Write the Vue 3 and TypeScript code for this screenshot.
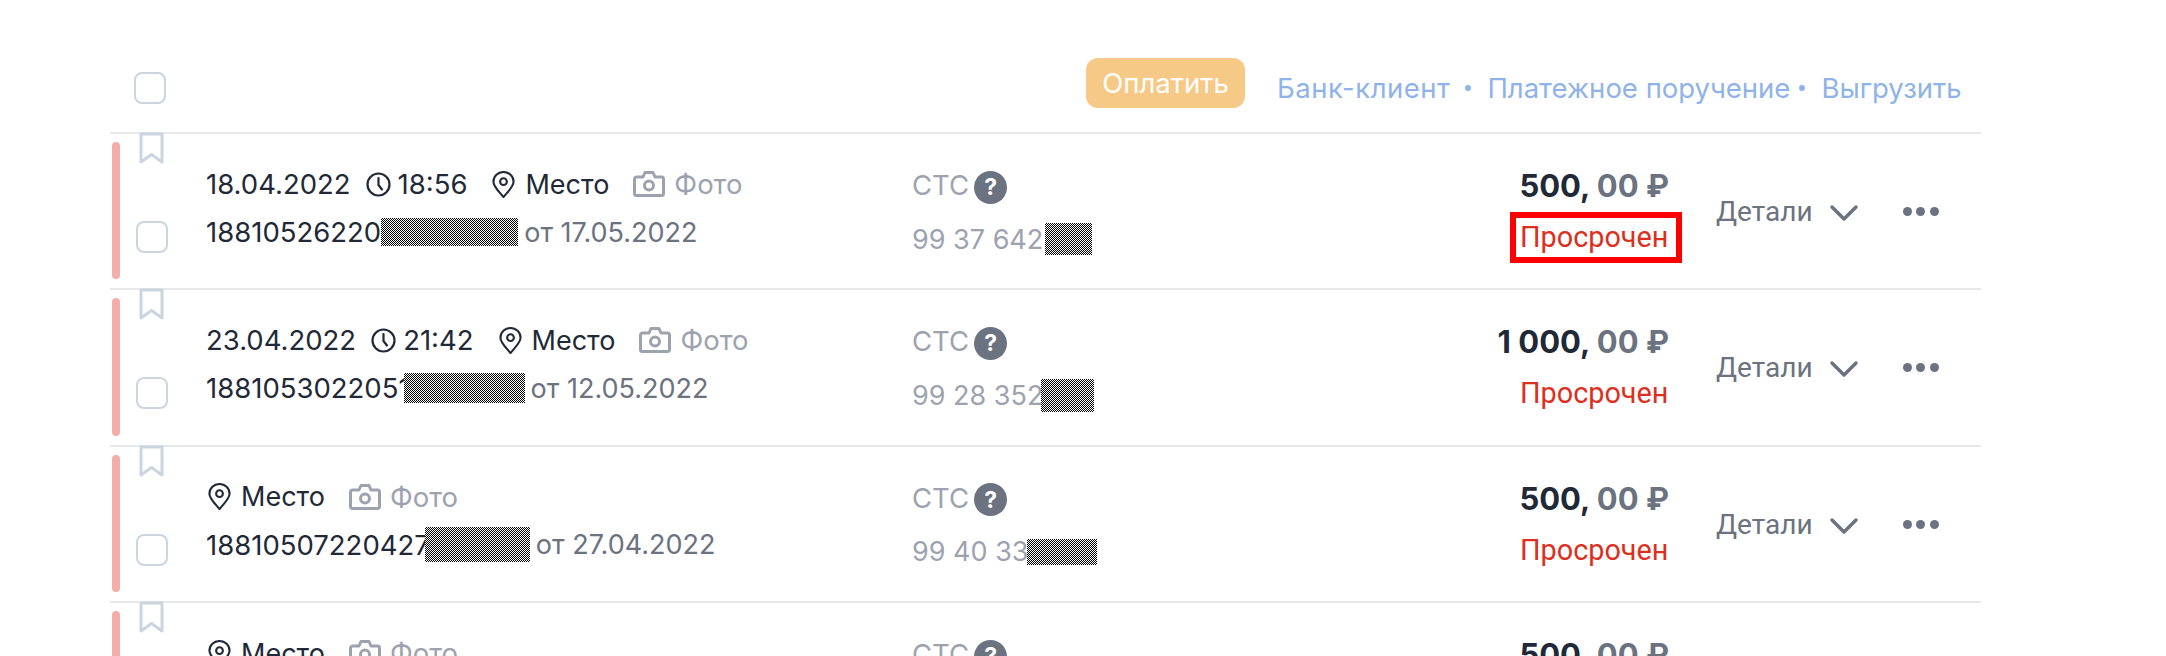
<script setup lang="ts">
interface Fine {
  date?: string
  time?: string
  number: string
  hiddenWidth: number
  hiddenHeight: number
  hiddenShift: number
  issued: string
  docNumber: string
  docHidden: number
  docHeight: number
  docShift: number
  rub: string
}

const fines: Fine[] = [
  { date: '18.04.2022', time: '18:56', number: '18810526220', hiddenWidth: 137, hiddenHeight: 28, hiddenShift: 0, issued: 'от 17.05.2022', docNumber: '99 37 6423', docHidden: 47, docHeight: 32, docShift: -15, rub: '500,' },
  { date: '23.04.2022', time: '21:42', number: '1881053022051', hiddenWidth: 121, hiddenHeight: 30, hiddenShift: -6, issued: 'от 12.05.2022', docNumber: '99 28 352', docHidden: 53, docHeight: 33, docShift: -2, rub: '1 000,' },
  { number: '18810507220427', hiddenWidth: 105, hiddenHeight: 35, hiddenShift: -5, issued: 'от 27.04.2022', docNumber: '99 40 33', docHidden: 70, docHeight: 26, docShift: -2, rub: '500,' },
  { number: '18810507220427', hiddenWidth: 105, hiddenHeight: 35, hiddenShift: -5, issued: 'от 27.04.2022', docNumber: '99 40 33', docHidden: 70, docHeight: 26, docShift: -2, rub: '500,' },
]
</script>

<template>
  <div class="page">
    <div class="toolbar">
      <span class="checkbox"></span>
      <button class="pay-button">Оплатить</button>
      <div class="links">
        <a class="bank">Банк-клиент</a>
        <i class="dot"></i>
        <a>Платежное поручение</a>
        <i class="dot dot-near"></i>
        <a>Выгрузить</a>
      </div>
    </div>

    <div v-for="(fine, index) in fines" :key="index" class="row">
      <svg class="bookmark" width="25" height="32" viewBox="0 0 25 32" fill="none" stroke="#cbd5e0" stroke-width="3" stroke-linejoin="round">
        <path d="M2 2h21v28l-10.500-7.500L2 30z" />
      </svg>
      <span class="stripe"></span>
      <div class="check-col"><span class="checkbox"></span></div>

      <div class="main-col">
        <div class="meta">
          <template v-if="fine.date">
            <span>{{ fine.date }}</span>
            <span class="time">
              <svg width="25" height="25" viewBox="0 0 25 25" fill="none" stroke="#1f2937" stroke-width="2.200" stroke-linecap="round">
                <circle cx="12.500" cy="12.500" r="11" />
                <path d="M12.500 6v7l3.500 4.500" />
              </svg>
              {{ fine.time }}
            </span>
          </template>
          <span class="place" :class="{ first: !fine.date }">
            <svg width="23" height="27" viewBox="0 0 24 28" fill="none" stroke="#1f2937" stroke-width="2.200" stroke-linejoin="round">
              <path d="M12 27C6 20 1.500 16 1.500 11a10.500 10 0 0 1 21 0c0 5-4.500 9-10.500 16z" />
              <circle cx="12" cy="11" r="3.500" />
            </svg>
            Место
          </span>
          <span class="photo">
            <svg width="32" height="26" viewBox="0 0 32 26" fill="none" stroke="#9ca3af" stroke-width="3" stroke-linejoin="round">
              <path d="M3.500 6H10l2-4.500h8L22 6h6.500a2 2 0 0 1 2 2v14.500a2 2 0 0 1-2 2h-25a2 2 0 0 1-2-2V8a2 2 0 0 1 2-2z" />
              <circle cx="16" cy="14.500" r="4.500" />
            </svg>
            Фото
          </span>
        </div>
        <div class="number">
          <span>{{ fine.number }}</span>
          <span
            class="hidden-box"
            :style="{ width: fine.hiddenWidth + 'px', height: fine.hiddenHeight + 'px', marginLeft: fine.hiddenShift + 'px' }"
          ></span>
          <span class="issued">{{ fine.issued }}</span>
        </div>
      </div>

      <div class="doc-col">
        <div class="doc-title">
          СТС
          <span class="hint">?</span>
        </div>
        <div class="doc-number">
          <span>{{ fine.docNumber }}</span>
          <span
            class="hidden-box"
            :style="{ width: fine.docHidden + 'px', height: fine.docHeight + 'px', marginLeft: fine.docShift + 'px' }"
          ></span>
        </div>
      </div>

      <div class="sum-col">
        <div class="sum">{{ fine.rub }} <span class="kop">00 ₽</span></div>
        <div class="status" :class="{ marked: index === 0 }">Просрочен</div>
      </div>

      <div class="details">
        Детали
        <svg width="30" height="18" viewBox="0 0 30 18" fill="none" stroke="#6b7280" stroke-width="3.500" stroke-linecap="round" stroke-linejoin="round">
          <path d="M3 3l12 12L27 3" />
        </svg>
      </div>
      <div class="more"><i></i><i></i><i></i></div>
    </div>
  </div>
</template>

<style>
html,
body {
  background: #fff;
  overflow: hidden;
}
</style>

<style scoped>
.page {
  width: 1871px;
  height: 656px;
  margin-left: 110px;
  overflow: hidden;
  font-family: Inter, "Noto Sans", sans-serif;
  font-size: 27.500px;
  color: #1f2937;
}

.toolbar {
  display: flex;
  align-items: center;
  height: 132px;
  padding: 44px 0 0 24px;
  box-sizing: border-box;
}

.checkbox {
  display: block;
  width: 32px;
  height: 32px;
  box-sizing: border-box;
  border: 2.500px solid #cbd5e0;
  border-radius: 8px;
}

.pay-button {
  margin-left: 920px;
  width: 159px;
  height: 50px;
  margin-top: -10px;
  padding: 0;
  border: none;
  border-radius: 12px;
  background: #f6c986;
  color: #fff;
  font: inherit;
  font-size: 27.500px;
}

.links {
  display: flex;
  align-items: center;
  margin-left: 32px;
  color: #8fb3e8;
  white-space: nowrap;
}

.bank {
  letter-spacing: 0.500px;
}

.dot {
  width: 6px;
  height: 6px;
  margin: 0 16px 0 15px;
  border-radius: 50%;
  background: #8fb3e8;
}

.dot-near {
  margin: 0 16px 0 9px;
}

.row {
  position: relative;
  display: flex;
  height: 156.400px;
  box-sizing: border-box;
  border-top: 2px solid #e5e7eb;
}

.bookmark {
  position: absolute;
  left: 29px;
  top: -2px;
}

.stripe {
  flex: none;
  width: 8px;
  margin: 8px 16px 9px 2px;
  border-radius: 4px;
  background: #f5adaa;
}

.check-col {
  flex: none;
  width: 70px;
  padding-top: 87px;
}

.main-col {
  flex: none;
  width: 706px;
  padding-top: 30px;
}

.meta {
  display: flex;
  align-items: center;
  height: 40px;
  white-space: nowrap;
}

.meta svg {
  flex: none;
}

.time,
.place,
.photo {
  display: flex;
  align-items: center;
}

.time {
  gap: 7px;
  margin-left: 15px;
}

.place {
  gap: 10px;
  margin-left: 25px;
  font-size: 27px;
}

.place.first {
  gap: 10px;
  margin-left: 2px;
}

.photo {
  margin-left: 24px;
  gap: 9px;
  color: #9ca3af;
}

.number {
  display: flex;
  align-items: center;
  margin-top: 8px;
  height: 40px;
  white-space: nowrap;
}

.hidden-box {
  flex: none;
  display: block;
  background: repeating-conic-gradient(#000 0 25%, #fff 0 50%) 0 0 / 2px 2px;
}

.issued {
  margin-left: 6px;
  font-size: 27px;
  color: #6b7280;
}

.doc-col {
  flex: none;
  width: 400px;
  padding-top: 31px;
  color: #9ca3af;
}

.doc-title {
  display: flex;
  align-items: center;
  height: 40px;
  gap: 5px;
}

.hint {
  display: flex;
  align-items: center;
  justify-content: center;
  width: 33px;
  height: 33px;
  margin-top: 4px;
  border-radius: 50%;
  background: #6b7280;
  color: #fff;
  font-size: 23px;
  font-weight: 700;
}

.doc-number {
  display: flex;
  align-items: center;
  margin-top: 18px;
  height: 32px;
  font-size: 27px;
  white-space: nowrap;
}

.sum-col {
  flex: none;
  width: 370px;
  padding-top: 32px;
  display: flex;
  flex-direction: column;
  align-items: flex-end;
}

.sum {
  height: 40px;
  line-height: 40px;
  padding-right: 13px;
  font-size: 31px;
  font-weight: 700;
  white-space: nowrap;
}

.kop {
  color: #6b7280;
}

.status {
  margin-top: 12px;
  height: 39px;
  width: 172px;
  padding: 0 0 0 10px;
  box-sizing: border-box;
  line-height: 39px;
  text-align: left;
  font-family: Roboto, sans-serif;
  font-size: 28.800px;
  color: #dc2f20;
  white-space: nowrap;
}

.marked {
  outline: 6px solid #ff0000;
  outline-offset: -6px;
  height: 51px;
  margin-top: 6px;
  line-height: 51px;
}

.details {
  flex: none;
  display: flex;
  align-items: flex-start;
  gap: 16px;
  margin-left: 34px;
  padding-top: 58px;
  height: 40px;
  line-height: 40px;
  font-family: Roboto, sans-serif;
  font-size: 28px;
  color: #6b7280;
}

.details svg {
  margin-top: 12px;
}

.more {
  flex: none;
  display: flex;
  gap: 4.500px;
  margin-left: 44px;
  padding-top: 73px;
  height: 9px;
}

.more i {
  width: 9px;
  height: 9px;
  border-radius: 50%;
  background: #6b7280;
}
</style>
